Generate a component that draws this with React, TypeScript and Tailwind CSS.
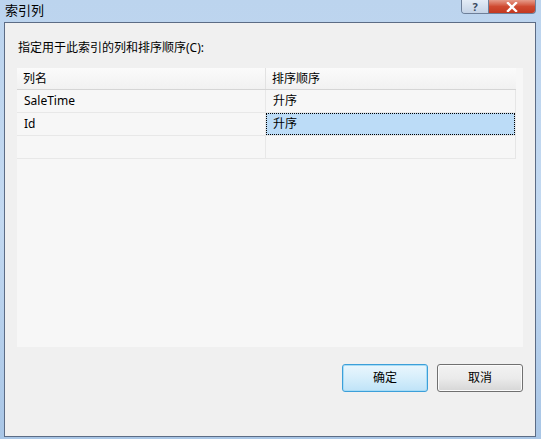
import * as React from "react";

type Row = { name: string; order: string };

const rows: Row[] = [
  { name: "SaleTime", order: "升序" },
  { name: "Id", order: "升序" },
  { name: "", order: "" },
];

const font = { fontFamily: '"Noto Sans", "Noto Sans CJK SC", sans-serif' };

function TitleButtons() {
  return (
    <div className="flex h-[14px] mr-[5px] rounded-b-[4px] overflow-hidden border border-t-0 border-[#6d7f99]">
      <div className="w-[27px] flex items-center justify-center bg-gradient-to-b from-[#e4ecf6] to-[#c4d3e6] border-r border-[#6d7f99] text-[11px] font-bold text-[#3b4a5e] leading-none">
        ?
      </div>
      <div className="w-[46px] flex items-center justify-center bg-gradient-to-b from-[#e59b8a] via-[#cf4a31] to-[#c3381f]">
        <svg width="12" height="10" viewBox="0 0 12 10">
          <path d="M2 1 L10 9 M10 1 L2 9" stroke="#ffffff" strokeWidth="2.4" strokeLinecap="square" />
        </svg>
      </div>
    </div>
  );
}

export default function App() {
  return (
    <div
      className="w-[541px] h-[439px] flex flex-col bg-gradient-to-b from-[#bcd4ee] via-[#c3d9f1] to-[#a9c6e6] text-black"
      style={font}
    >
      {/* Title bar */}
      <div className="h-[22px] flex items-start justify-between">
        <div className="pl-[5px] pt-[2px] text-[13px] leading-[16px]">索引列</div>
        <TitleButtons />
      </div>

      {/* Client area */}
      <div className="flex-1 ml-[4px] mr-[5px] mb-[2px] border border-[#5c6c85] bg-[#f0f0f0] flex flex-col px-[12px] pt-[17px] pb-[44px]">
        <div className="text-[12px] leading-[16px] pl-px">指定用于此索引的列和排序顺序(C):</div>

        <div className="mt-[12px] h-[279px] bg-[#f7f7f7] flex flex-col">
          {/* Header */}
          <div className="flex h-[22px] w-[499px] bg-gradient-to-b from-[#fbfbfb] to-[#f1f1f1] border-b border-[#d5d5d5] text-[12px]">
            <div className="w-[249px] pl-[6px] flex items-center border-r border-[#e2e2e2]">列名</div>
            <div className="flex-1 pl-[6px] flex items-center">排序顺序</div>
          </div>

          {/* Rows */}
          <div className="w-[499px] border-r border-[#e6e6e6] text-[12px]">
            {rows.map((r, i) => (
              <div key={i} className="flex h-[23px] border-b border-[#e8e8e8]">
                <div className="w-[249px] pl-[7px] flex items-center border-r border-[#e8e8e8]">
                  {r.name}
                </div>
                {i === 1 ? (
                  <div className="flex-1 pl-[6px] flex items-center bg-[#bcdcf7] border border-dotted border-black">
                    {r.order}
                  </div>
                ) : (
                  <div className="flex-1 pl-[7px] flex items-center">{r.order}</div>
                )}
              </div>
            ))}
          </div>
        </div>

        <div className="mt-auto flex justify-end gap-[9px]">
          <button className="w-[86px] h-[28px] rounded-[3px] border border-[#3c9fd9] bg-gradient-to-b from-[#eaf6fd] via-[#d6eefb] to-[#bfe3f8] text-[12px] shadow-[inset_0_0_0_1px_#a7dcf6]">
            确定
          </button>
          <button className="w-[86px] h-[28px] rounded-[3px] border border-[#707070] bg-gradient-to-b from-[#f2f2f2] via-[#ebebeb] to-[#d6d6d6] text-[12px] shadow-[inset_0_0_0_1px_#fbfbfb]">
            取消
          </button>
        </div>
      </div>
    </div>
  );
}
